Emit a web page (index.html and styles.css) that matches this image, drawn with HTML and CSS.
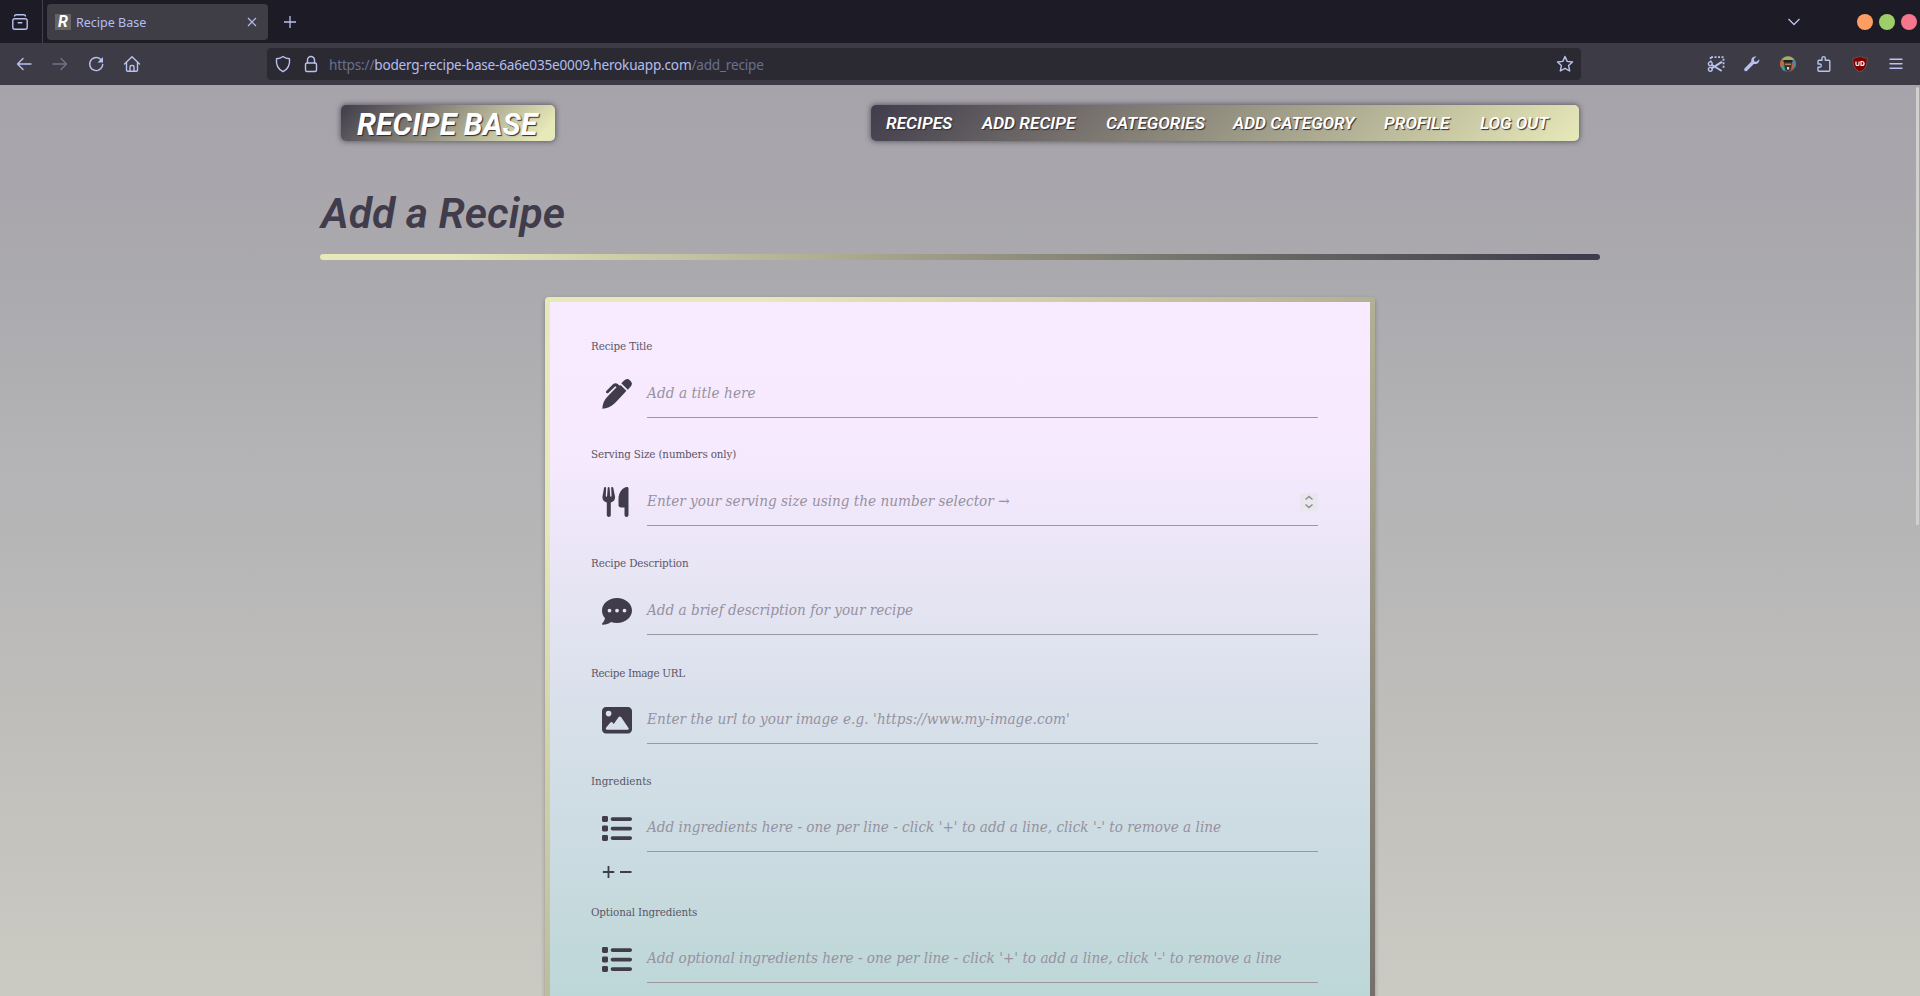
FILE: index.html
```html
<!DOCTYPE html>
<html lang="en">
<head>
<meta charset="utf-8">
<title>Recipe Base</title>
<link rel="stylesheet" href="styles.css">
</head>
<body>
<header class="tabbar">
  <div class="tab-history"><svg class="ico" viewBox="0 0 18 18"><rect x="1.8" y="5.8" width="14.4" height="10.4" rx="2"/><path d="M3.5 3c.2-1 .8-1.300 1.600-1.300h7.800c.8 0 1.400.3 1.600 1.300M7.200 9.800h3.600"/></svg></div>
  <div class="tab"><span class="favicon">R</span><span class="tab-title">Recipe Base</span><svg class="close" viewBox="0 0 10 10"><path d="M1 1l8 8M9 1l-8 8"/></svg></div>
  <svg class="plus" viewBox="0 0 12 12"><path d="M6 0v12M0 6h12"/></svg>
  <svg class="chevron" viewBox="0 0 12 8"><path d="M.5 1L6 6.500 11.500 1"/></svg>
  <div class="dots"><i class="dot orange"></i><i class="dot green"></i><i class="dot pink"></i></div>
</header>
<div class="toolbar">
  <div class="btn"><svg class="ico" viewBox="0 0 18 18"><path d="M16 9H2.500M8 3.500L2.500 9 8 14.500"/></svg></div>
  <div class="btn dim"><svg class="ico" viewBox="0 0 18 18"><path d="M2 9h13.500M10 3.500L15.500 9 10 14.500"/></svg></div>
  <div class="btn"><svg class="ico" viewBox="0 0 18 18"><path d="M15.200 6.500A6.500 6.500 0 1 0 15.700 9.500"/><path class="solid" d="M16 2v5.500h-5.500z"/></svg></div>
  <div class="btn"><svg class="ico" viewBox="0 0 18 18"><path d="M1.500 9L9 1.800 16.500 9M3.500 7.500V15c0 .8.400 1.200 1.200 1.200h8.600c.8 0 1.200-.4 1.200-1.200V7.500M7 16v-4c0-1 .5-1.500 1.200-1.500h1.600c.7 0 1.200.5 1.200 1.500v4"/></svg></div>
  <div class="urlbar">
    <svg class="ico" viewBox="0 0 18 18"><path d="M9 1.500c2 1.500 4 2.100 6.500 2.200.6 5.800-1.200 10.300-6.500 13C3.700 14 1.900 9.500 2.500 3.700 5 3.600 7 3 9 1.500z"/></svg>
    <svg class="ico lock" viewBox="0 0 18 18"><rect x="3.500" y="8" width="11" height="8.500" rx="1.500"/><path d="M5.500 8V5a3.500 3.500 0 0 1 7 0v3"/></svg>
    <span class="url"><span class="faint">https://</span>boderg-recipe-base-6a6e035e0009.herokuapp.com<span class="faint">/add_recipe</span></span>
    <svg class="ico star" viewBox="0 0 18 18"><path d="M9 1.500l2.200 4.900 5.300.6-3.900 3.600 1.100 5.400L9 13.300 4.300 16l1.100-5.400L1.500 7l5.300-.6z"/></svg>
  </div>
  <div class="btn"><svg class="ico" viewBox="0 0 18 18"><path class="dash" d="M4 2.200h12.500v12M3.700 2v5"/><circle cx="3.300" cy="8.800" r="1.900"/><circle cx="3.300" cy="14.300" r="1.900"/><path class="thick" d="M5 13.200l9.500-6M5 10l9 5.500"/></svg></div>
  <div class="btn"><svg class="ico" viewBox="0 0 18 18"><path class="solid" d="M16.300 4.200l-2.600 2.600-2.400-.4-.5-2.500L13.400 1.500C10.500.8 7.600 3.200 8.400 6.600L1.500 13.500c-1.300 1.500.9 3.600 2.300 2.400l7-7c3.500.8 6-1.800 5.500-4.700z"/></svg></div>
  <div class="btn"><svg class="avatar" viewBox="0 0 16 16"><circle cx="8" cy="8" r="8" fill="#58605f"/><path d="M2 3a8 8 0 0 1 12 0l-2 2H4z" fill="#a9ad5e"/><path d="M0 8c0-2 1-4 2-5l2 4-1 6c-2-1-3-3-3-5z" fill="#c66b36"/><path d="M1 11l3-2 1 5-1 1c-1-1-2-2-3-4z" fill="#3f9aa8"/><path d="M16 8c0-2-1-4-2-5l-2 4 1 6c2-1 3-3 3-5z" fill="#4e83a5"/><path d="M12 8l2 1-1 4-2 1z" fill="#c9603c"/><path d="M4 5h8l-1 8-3 3-3-3z" fill="#3a302d"/><path d="M3.500 4h9v1.800h-9z" fill="#1e2025"/><path d="M5 7.500h6v1.600H5z" fill="#a88455"/><path d="M7 11h2.200v2.600H7z" fill="#dfc8ba"/></svg></div>
  <div class="btn"><svg class="ico" viewBox="0 0 18 18"><path d="M3 6.200c0-.6.300-1 1-1h3V3.300c0-2.300 3.300-2.300 3.300 0v1.900h3.500c.7 0 1 .4 1 1v9c0 .7-.3 1-1 1H4c-.7 0-1-.3-1-1v-3h1.800c2 0 2-3.200 0-3.200H3z"/></svg></div>
  <div class="btn"><svg class="shield" viewBox="0 0 16 18"><path d="M8 1c2 1.300 4 2 7 2 .3 7-1 11-7 14C2 14 .7 10 1 3c3 0 5-.7 7-2z" fill="#800000" stroke="#60545c"/><path d="M4 6.500v2.700c0 1.700 3 1.700 3 0V6.500M9 6.500v4h.8c3 0 3-4 0-4z" fill="none" stroke="#fff" stroke-width="1.200"/></svg></div>
  <div class="btn"><svg class="ico" viewBox="0 0 18 18"><path d="M3 4.200h12M3 8.700h12M3 13.200h12"/></svg></div>
</div>
<main class="page">
  <i class="scroll-thumb"></i>
  <div class="topnav">
    <div class="brand"><span>RECIPE BASE</span></div>
    <nav class="menu"><a class="m1">RECIPES</a><a class="m2">ADD RECIPE</a><a class="m3">CATEGORIES</a><a class="m4">ADD CATEGORY</a><a class="m5">PROFILE</a><a class="m6">LOG OUT</a></nav>
  </div>
  <div class="container">
    <h1><span>Add a Recipe</span></h1>
    <div class="rule"></div>
    <form class="card">
      <div class="card-body">
        <div class="field first"><label>Recipe Title</label><div class="row"><svg class="fi" viewBox="0 0 30 30"><path d="M18.800 6.200l5.600 5.600C20.500 16.500 17 20 13 24c-4 4-8 5.500-12.700 5.800C.6 25 2 21 6 17l8.500-8.700-1.200-1.100-7 6.800c-1.300 1-3-.6-2-1.900L11 5.300c1.500-1.500 3.300-1.500 4.800-.2l1.500 1.500zM19.300 4.200l2.800-2.600c2-2 4-2 5.900-.1 2.400 2.100 2.500 4.200.5 6.300l-2.700 2.900z"/></svg><span class="ph p1">Add a title here</span></div></div>
        <div class="field second"><label>Serving Size (numbers only)</label><div class="row"><svg class="fi" viewBox="0 0 30 30"><path d="M2 1c.2-1.300 2.200-1.200 2.100.2L3.800 9c0 .9 1.200.9 1.300 0l.6-8C5.800-.2 7.500-.2 7.600 1l.6 8c.1.900 1.300.9 1.300 0L9.200 1.200C9.100-.2 11-.3 11.300 1L13 9.500c.5 3-1.400 5.300-4.200 5.900V28c0 2.500-4 2.500-4 0V15.400C2 14.800 0 12.500.5 9.500zM26.500 1.500V28c0 2.600-4 2.600-4 0v-7.500H19c-1.500 0-2.500-1-2.500-2.500v-6C16.500 5 21 0 25 0c1 0 1.500.6 1.500 1.500z"/></svg><span class="ph p2">Enter your serving size using the number selector →</span><svg class="spin" viewBox="0 0 18 18"><path d="M5.500 6.500L9 3.500l3.500 3M5.500 11.500l3.500 3 3.500-3"/></svg></div></div>
        <div class="field third"><label>Recipe Description</label><div class="row"><svg class="fi" viewBox="0 0 30 30"><path fill-rule="evenodd" d="M15 2c8.400 0 15 5.600 15 12.500S23.400 27 15 27c-2.200 0-4.200-.4-6-1-2.300 1.700-5 2.700-8.200 2.700-.8 0-1.100-.8-.5-1.400 1.300-1.400 2.300-3 2.700-5.100-1.900-2.100-3-4.700-3-7.700C0 7.600 6.600 2 15 2zM7.500 12.700a1.900 1.900 0 1 0 0 3.800 1.900 1.900 0 0 0 0-3.800zm7.500 0a1.900 1.900 0 1 0 0 3.800 1.900 1.900 0 0 0 0-3.800zm7.500 0a1.900 1.900 0 1 0 0 3.800 1.900 1.900 0 0 0 0-3.800z"/></svg><span class="ph p3">Add a brief description for your recipe</span></div></div>
        <div class="field fourth lower"><label>Recipe Image URL</label><div class="row"><svg class="fi" viewBox="0 0 30 30"><path fill-rule="evenodd" d="M4 2h22c2.200 0 4 1.700 4 4v18.500c0 2.200-1.800 4-4 4H4c-2.200 0-4-1.800-4-4V6c0-2.300 1.800-4 4-4zm2.600 3.800a2.800 2.800 0 1 0 0 5.600 2.800 2.800 0 0 0 0-5.600zM5 24.700h20.500c1 0 1.500-1 1-1.800L19 12c-.6-.8-1.700-.8-2.300 0l-5 7-1.200-1.500c-.6-.7-1.500-.7-2.100 0L4 22.800c-.6.900 0 1.900 1 1.900z"/></svg><span class="ph p4">Enter the url to your image e.g. 'https://www.my-image.com'</span></div></div>
        <div class="field fifth lower"><label>Ingredients</label><div class="row"><svg class="fi" viewBox="0 0 30 30"><path d="M1.400 3h3.200Q6 3 6 4.400v3.200Q6 9 4.600 9H1.400Q0 9 0 7.600V4.400Q0 3 1.400 3zm0 9.500h3.200Q6 12.500 6 13.900v3.200q0 1.400-1.400 1.400H1.400Q0 18.500 0 17.100v-3.200q0-1.400 1.400-1.400zm0 9.500h3.200Q6 22 6 23.400v3.200Q6 28 4.600 28H1.400Q0 28 0 26.600v-3.200Q0 22 1.400 22zM10.500 4.200h17.700c2.400 0 2.400 3.800 0 3.800H10.500c-2.400 0-2.400-3.800 0-3.800zm0 9.500h17.700c2.400 0 2.400 3.800 0 3.800H10.500c-2.400 0-2.400-3.800 0-3.800zm0 9.500h17.700c2.400 0 2.400 3.800 0 3.800H10.500c-2.400 0-2.400-3.800 0-3.800z"/></svg><span class="ph p5">Add ingredients here - one per line - click '+' to add a line, click '-' to remove a line</span></div>
          <div class="adders"><svg viewBox="0 0 30 14"><path d="M6.500 1v12M.8 7h11.500M18 7h11.500"/></svg></div></div>
        <div class="field lower"><label>Optional Ingredients</label><div class="row"><svg class="fi" viewBox="0 0 30 30"><path d="M1.400 3h3.200Q6 3 6 4.400v3.200Q6 9 4.600 9H1.400Q0 9 0 7.600V4.400Q0 3 1.400 3zm0 9.500h3.200Q6 12.500 6 13.900v3.200q0 1.400-1.400 1.400H1.400Q0 18.500 0 17.100v-3.200q0-1.400 1.400-1.400zm0 9.500h3.200Q6 22 6 23.400v3.200Q6 28 4.600 28H1.400Q0 28 0 26.600v-3.200Q0 22 1.400 22zM10.500 4.200h17.700c2.400 0 2.400 3.800 0 3.800H10.500c-2.400 0-2.400-3.800 0-3.800zm0 9.500h17.700c2.400 0 2.400 3.800 0 3.800H10.500c-2.400 0-2.400-3.800 0-3.800zm0 9.500h17.700c2.400 0 2.400 3.800 0 3.800H10.500c-2.400 0-2.400-3.800 0-3.800z"/></svg><span class="ph p6">Add optional ingredients here - one per line - click '+' to add a line, click '-' to remove a line</span></div></div>
      </div>
    </form>
  </div>
</main>
</body>
</html>
```
FILE: styles.css
```css
* { box-sizing: border-box; }
body { margin: 0; width: 1920px; height: 996px; overflow: hidden; display: flex; flex-direction: column; font-family: "Noto Sans", sans-serif; }
svg { display: block; flex: none; }
.ico { width: 18px; height: 18px; fill: none; stroke: #b9c1ef; stroke-width: 1.4; stroke-linecap: round; stroke-linejoin: round; }
.ico .solid { fill: #b9c1ef; stroke: none; }
.ico .dash { stroke-dasharray: 2 1.500; stroke-linecap: butt; stroke-width: 1.800; }
.ico .thick { stroke-width: 2; }

.tabbar { height: 43px; flex: none; background: #1c1b26; display: flex; align-items: center; }
.tab-history { width: 43px; height: 43px; border-right: 1px solid #42414e; padding: 13px 0 0 11px; }
.tab { width: 221px; height: 36px; margin-left: 4px; background: #3f3e47; border-radius: 4px; display: flex; align-items: center; padding: 0 11px 0 8px; }
.favicon { width: 16px; height: 16px; background: #666361; color: #fff; font: italic 700 16px/16px Roboto, sans-serif; text-align: center; }
.tab-title { margin-left: 5px; flex: 1; font-size: 12.500px; line-height: 18px; padding-top: 3px; color: #b4beee; white-space: nowrap; }
.close { width: 10px; height: 10px; stroke: #b4beee; fill: none; stroke-width: 1.200; }
.plus { width: 12px; height: 12px; margin-left: 16px; stroke: #b9c1ef; stroke-width: 1.300; }
.chevron { width: 12px; height: 8px; margin-left: auto; fill: none; stroke: #b9c1ef; stroke-width: 1.300; }
.dots { display: flex; gap: 6px; margin: 0 3px 0 57px; }
.dot { width: 16px; height: 16px; border-radius: 50%; }
.orange { background: #ff9e64; }
.green { background: #9ece6a; }
.pink { background: #f7768e; }

.toolbar { height: 42px; flex: none; background: #3d3c46; display: flex; align-items: center; padding: 0 6px; }
.btn { width: 36px; display: flex; justify-content: center; }
.dim { opacity: .4; }
.avatar { width: 16px; height: 16px; }
.shield { width: 16px; height: 18px; }
.urlbar { width: 1314px; height: 32px; margin: 0 117px; background: #2b2a33; border-radius: 4px; display: flex; align-items: center; padding: 0 7px; color: #b4beee; }
.lock { margin-left: 10px; }
.url { margin-left: 9px; padding-top: 1px; font-size: 13.600px; letter-spacing: -.2px; white-space: nowrap; }
.faint { color: #69708f; }
.star { margin-left: auto; }

.page { position: relative; flex: 1; min-height: 0; overflow: hidden; background: linear-gradient(#a6a3aa, #abaaae 23%, #b4b3b5 42%, #cbcac2); }
.scroll-thumb { position: absolute; right: 1px; top: 2px; width: 3px; height: 438px; border-radius: 2px; background: #d0d0ce; }
.topnav { display: flex; justify-content: space-between; padding: 20px 341px 0; }
.brand, .menu { height: 36px; border-radius: 5px; box-shadow: 0 0 5px 1px rgba(50, 48, 60, .6); color: #fff; font-family: Roboto, sans-serif; font-style: italic; text-shadow: 1px 1px 1px #2c2a33; white-space: nowrap; }
.brand { width: 214px; background: linear-gradient(135deg, #403c4b, #75706c 30%, #e7e9b9 92%); font-size: 30.500px; font-weight: 700; line-height: 39px; padding-left: 16px; }
.menu { width: 708px; background: linear-gradient(135deg, #403c4b, #75706c 30%, #e7e9b9); display: flex; gap: 29px; padding-left: 15px; font-size: 17.300px; font-weight: 600; line-height: 37px; }
.m1 { width: 67px; } .m2 { width: 95px; } .m3 { width: 98px; } .m4 { width: 122px; } .m5 { width: 67px; } .m6 { width: 69px; }
.container { width: 1280px; margin: 0 auto; }
h1 { margin: 41px 0 0; height: 72px; padding-left: 1px; font: italic 600 42.700px/62px Roboto, sans-serif; color: #403c4b; }
.rule { height: 6px; border-radius: 3px; background: linear-gradient(90deg, #e7e9b9 10%, #75746c 68%, #403c4b 98%); }
.card { width: 830px; height: 1350px; margin: 37px auto 0; padding: 5px; border-radius: 4px; background: linear-gradient(135deg, #e7e9b9 10%, #75706c 70%, #403c4b); box-shadow: 0 2px 4px rgba(0, 0, 0, .28); }
.card-body { height: 1340px; padding: 34px 52px 0 41px; background: linear-gradient(#f8ebff 0, #f7eaff 140px, #d5dfe8 440px, #bdd7d8 694px); }
.field { height: 109px; }
.first, .fourth { height: 108px; }
.fifth { height: 131px; }
label { display: block; height: 20px; font: 11.500px/20px "DejaVu Serif Condensed", "DejaVu Serif", serif; letter-spacing: -.13px; color: #5b5666; white-space: nowrap; }
.lower label { padding-top: 1px; }
.fourth label { letter-spacing: -.3px; }
.fifth label { letter-spacing: 0; }
.row { height: 48px; margin: 14px 0 0 56px; border-bottom: 1px solid #9b989f; display: flex; }
.fi { width: 30px; height: 30px; margin: 9px 15px 0 -45px; fill: #403c4b; }
.ph { flex: 1; font: italic 15.150px/47px "DejaVu Serif Condensed", "DejaVu Serif", serif; color: #9691a0; white-space: nowrap; }
.p1, .p4 { letter-spacing: .08px; }
.spin { width: 18px; height: 18px; margin-top: 15px; background: #e9e7ec; border-radius: 2px; fill: none; stroke: #8f8b99; stroke-width: 1.500; }
.adders { padding: 13px 0 0 11px; }
.adders svg { width: 30px; height: 14px; stroke: #403c4b; stroke-width: 1.800; fill: none; }
```
